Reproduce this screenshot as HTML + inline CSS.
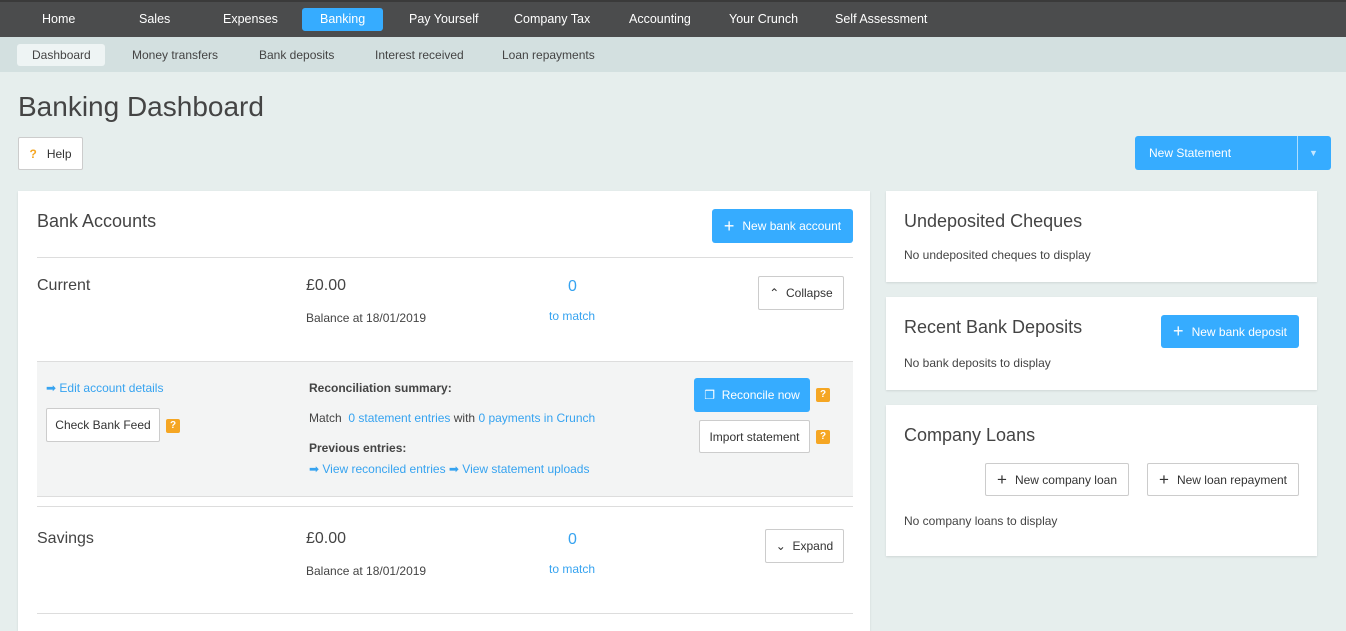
<!DOCTYPE html><html><head><style>
*{box-sizing:border-box;margin:0;padding:0}
body{width:1346px;height:621px;overflow:hidden;background:#e6eeed;font-family:"Liberation Sans",sans-serif;color:#444;font-size:12px;position:relative}
.a{position:absolute}
.top{left:0;top:0;width:1346px;height:37px;background:#4b4c4d;border-top:2px solid #3a3a3a}
.top span{position:absolute;top:10px;color:#fff;font-size:12.5px}
.sub{left:0;top:37px;width:1346px;height:35px;background:#d3e0e0}
.sub span{position:absolute;top:11px;font-size:12px;color:#444}
.btn{position:absolute;background:#fff;border:1px solid #ccc;border-radius:2px;font-size:12px;color:#333;display:flex;align-items:center;justify-content:center}
.blue{position:absolute;background:#36acff;color:#fff;border-radius:3px;font-size:12px;display:flex;align-items:center;justify-content:center}
.card{position:absolute;background:#fff;box-shadow:0 1px 2px rgba(0,0,0,.1)}
.lnk{color:#36a3f0}
.q{display:inline-block;width:14px;height:14px;background:#f5a623;color:#fff;font-size:10px;font-weight:bold;text-align:center;line-height:14px;border-radius:2px;position:absolute}
h2{font-weight:normal;font-size:18px;color:#444;position:absolute}
</style></head><body>
<div class="a top">
<span style="left:42px">Home</span><span style="left:139px">Sales</span><span style="left:223px">Expenses</span>
<div class="a" style="left:302px;top:6px;width:81px;height:23px;background:#36acff;border-radius:3px"></div>
<span style="left:320px">Banking</span><span style="left:409px">Pay Yourself</span><span style="left:514px">Company Tax</span><span style="left:629px">Accounting</span><span style="left:729px">Your Crunch</span><span style="left:835px">Self Assessment</span>
</div>
<div class="a sub">
<div class="a" style="left:17px;top:7px;width:88px;height:22px;background:#eef4f4;border-radius:3px"></div>
<span style="left:32px">Dashboard</span><span style="left:132px">Money transfers</span><span style="left:259px">Bank deposits</span><span style="left:375px">Interest received</span><span style="left:502px">Loan repayments</span>
</div>
<div class="a" style="left:18px;top:91px;font-size:28px;color:#444">Banking Dashboard</div>
<div class="btn" style="left:18px;top:137px;width:65px;height:33px"><span style="color:#f5a623;font-weight:bold;margin-right:10px">?</span>Help</div>
<div class="blue" style="left:1135px;top:136px;width:196px;height:34px;justify-content:flex-start;padding-left:14px">New Statement<div class="a" style="left:162px;top:0;width:1px;height:34px;background:#fff;opacity:.6"></div><span class="a" style="left:174px;top:12px;font-size:9px;opacity:.7">▼</span></div>

<div class="card" style="left:18px;top:191px;width:852px;height:440px">
<h2 style="left:19px;top:20px">Bank Accounts</h2>
<div class="blue" style="left:694px;top:18px;width:141px;height:34px"><span style="font-size:18px;margin-right:8px">+</span>New bank account</div>
<div class="a" style="left:19px;top:66px;width:816px;height:1px;background:#ddd"></div>
<div class="a" style="left:19px;top:86px;font-size:16px">Current</div>
<div class="a" style="left:288px;top:86px;font-size:16px">£0.00</div>
<div class="a" style="left:288px;top:120px;font-size:12px">Balance at 18/01/2019</div>
<div class="a lnk" style="left:550px;top:87px;font-size:16px">0</div>
<div class="a lnk" style="left:531px;top:118px">to match</div>
<div class="btn" style="left:740px;top:85px;width:86px;height:34px">⌃&nbsp; Collapse</div>
<div class="a" style="left:19px;top:170px;width:816px;height:136px;background:#f3f4f4;border-top:1px solid #ddd;border-bottom:1px solid #ddd">
<div class="a lnk" style="left:9px;top:19px">➡ Edit account details</div>
<div class="btn" style="left:9px;top:46px;width:114px;height:34px">Check Bank Feed</div>
<span class="q" style="left:129px;top:57px">?</span>
<div class="a" style="left:272px;top:19px;font-weight:bold;color:#444">Reconciliation summary:</div>
<div class="a" style="left:272px;top:49px">Match &nbsp;<span class="lnk">0 statement entries</span> with <span class="lnk">0 payments in Crunch</span></div>
<div class="a" style="left:272px;top:79px;font-weight:bold">Previous entries:</div>
<div class="a lnk" style="left:272px;top:100px">➡ View reconciled entries ➡ View statement uploads</div>
<div class="blue" style="left:657px;top:16px;width:116px;height:34px">❐&nbsp; Reconcile now</div>
<span class="q" style="left:779px;top:26px">?</span>
<div class="btn" style="left:662px;top:58px;width:111px;height:33px">Import statement</div>
<span class="q" style="left:779px;top:68px">?</span>
</div>
<div class="a" style="left:19px;top:315px;width:816px;height:1px;background:#ddd"></div>
<div class="a" style="left:19px;top:339px;font-size:16px">Savings</div>
<div class="a" style="left:288px;top:339px;font-size:16px">£0.00</div>
<div class="a" style="left:288px;top:373px">Balance at 18/01/2019</div>
<div class="a lnk" style="left:550px;top:340px;font-size:16px">0</div>
<div class="a lnk" style="left:531px;top:371px">to match</div>
<div class="btn" style="left:747px;top:338px;width:79px;height:34px">⌄&nbsp; Expand</div>
<div class="a" style="left:19px;top:422px;width:816px;height:1px;background:#ddd"></div>
</div>

<div class="card" style="left:886px;top:191px;width:431px;height:91px">
<h2 style="left:18px;top:20px">Undeposited Cheques</h2>
<div class="a" style="left:18px;top:57px">No undeposited cheques to display</div></div>
<div class="card" style="left:886px;top:297px;width:431px;height:93px">
<h2 style="left:18px;top:20px">Recent Bank Deposits</h2>
<div class="blue" style="left:275px;top:18px;width:138px;height:33px"><span style="font-size:18px;margin-right:8px">+</span>New bank deposit</div>
<div class="a" style="left:18px;top:59px">No bank deposits to display</div></div>
<div class="card" style="left:886px;top:405px;width:431px;height:151px">
<h2 style="left:18px;top:20px">Company Loans</h2>
<div class="btn" style="left:99px;top:58px;width:144px;height:33px"><span style="font-size:17px;margin-right:8px">+</span>New company loan</div>
<div class="btn" style="left:261px;top:58px;width:152px;height:33px"><span style="font-size:17px;margin-right:8px">+</span>New loan repayment</div>
<div class="a" style="left:18px;top:109px">No company loans to display</div></div>
</body></html>
